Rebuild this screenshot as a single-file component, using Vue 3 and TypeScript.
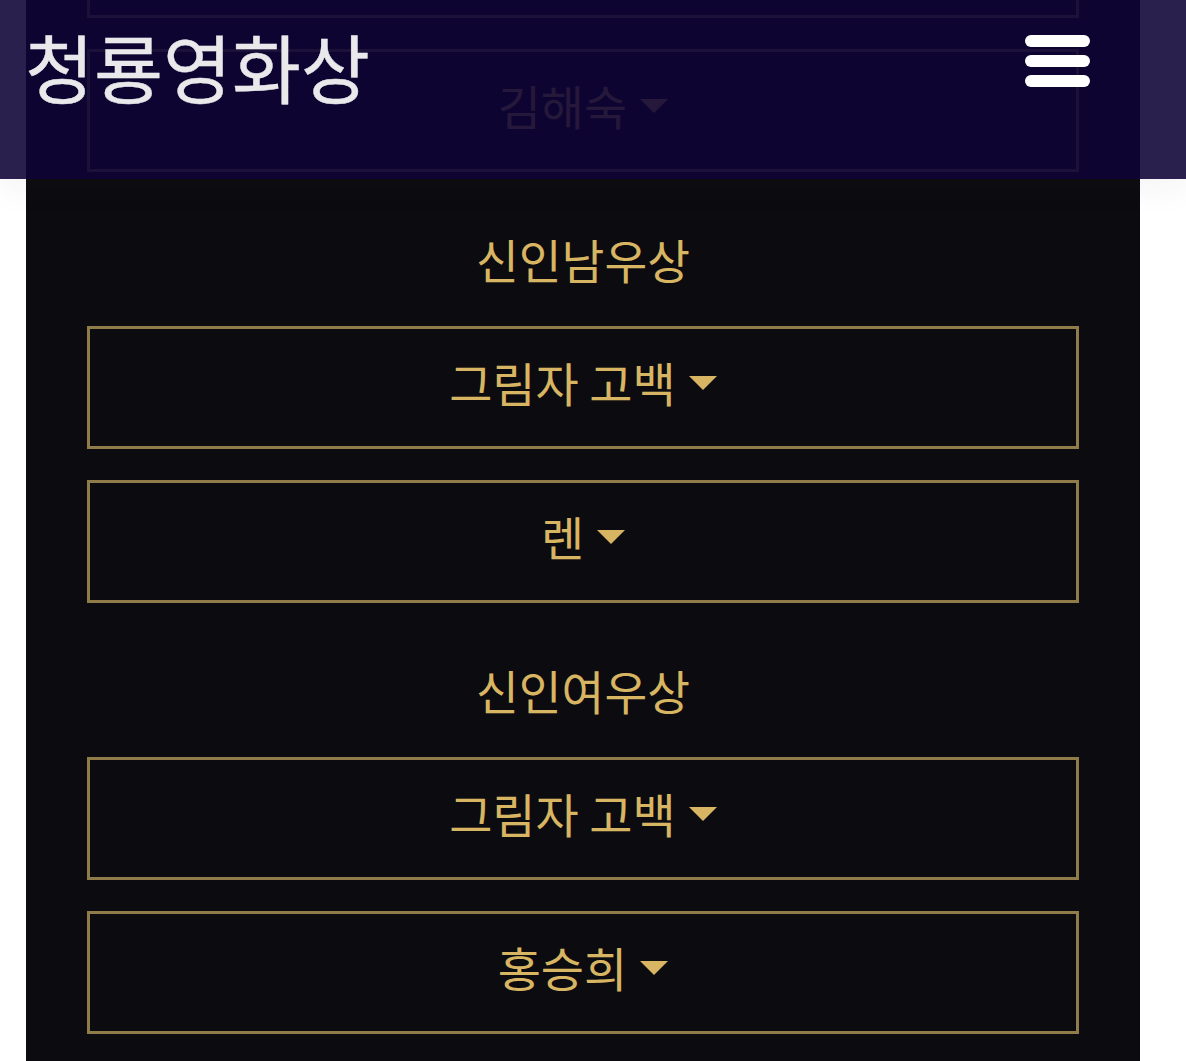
<script setup lang="ts">
interface Section {
  title?: string
  options: string[]
}

const sections: Section[] = [
  { options: ['', '김해숙'] },
  { title: '신인남우상', options: ['그림자 고백', '렌'] },
  { title: '신인여우상', options: ['그림자 고백', '홍승희'] },
]
</script>

<template>
  <div class="page">
    <main class="column">
      <section v-for="(section, i) in sections" :key="i" class="section">
        <h2 v-if="section.title" class="title">{{ section.title }}</h2>
        <button v-for="(option, j) in section.options" :key="j" class="select" type="button">
          <span class="label">{{ option }}</span>
          <span class="caret"></span>
        </button>
      </section>
    </main>

    <header class="header">
      <span class="logo">청룡영화상</span>
      <button class="menu" type="button" aria-label="메뉴">
        <span></span><span></span><span></span>
      </button>
    </header>
  </div>
</template>

<style>
html,
body {
  margin: 0;
  background: #fff;
}
</style>

<style scoped>
.page {
  position: relative;
  width: 1186px;
  height: 1061px;
  overflow: hidden;
  background: #fff;
  font-family: "Noto Sans CJK KR", "Noto Sans", sans-serif;
}

.column {
  width: 1114px;
  height: 1166px;
  margin: -105px 0 0 26px;
  padding: 0 61px;
  box-sizing: border-box;
  background: #0c0c10;
  display: flex;
  flex-direction: column;
}

.section {
  flex: none;
  display: flex;
  flex-direction: column;
  gap: 31px;
}

.section + .section {
  margin-top: 57px;
}

.title {
  margin: 0 0 3px;
  height: 63px;
  line-height: 59px;
  color: #d8b562;
  font-size: 46.5px;
  font-weight: 400;
  text-align: center;
}

.select {
  flex: none;
  height: 123px;
  box-sizing: border-box;
  padding: 0 0 12px;
  border: 3px solid #8f7c48;
  background: transparent;
  color: #d8b562;
  font: inherit;
  font-size: 47px;
  display: flex;
  align-items: center;
  justify-content: center;
  gap: 13px;
}

.caret {
  width: 0;
  height: 0;
  border-left: 14px solid transparent;
  border-right: 14px solid transparent;
  border-top: 14px solid #d8b562;
  margin-top: 2px;
}

.header {
  position: absolute;
  top: 0;
  left: 0;
  width: 1186px;
  height: 179px;
  background: rgba(13, 3, 54, 0.885);
  box-shadow: 0 10px 30px rgba(40, 30, 80, 0.05);
}

.logo {
  position: absolute;
  left: 25px;
  top: 12px;
  color: #e9e9ec;
  font-size: 75px;
  line-height: 108px;
  white-space: nowrap;
  -webkit-text-stroke: 0.4px #e9e9ec;
}

.menu {
  position: absolute;
  left: 1025px;
  top: 35px;
  width: 65px;
  padding: 0;
  border: 0;
  background: transparent;
  display: flex;
  flex-direction: column;
  gap: 8px;
}

.menu span {
  display: block;
  height: 12px;
  border-radius: 6px;
  background: #fff;
}
</style>
